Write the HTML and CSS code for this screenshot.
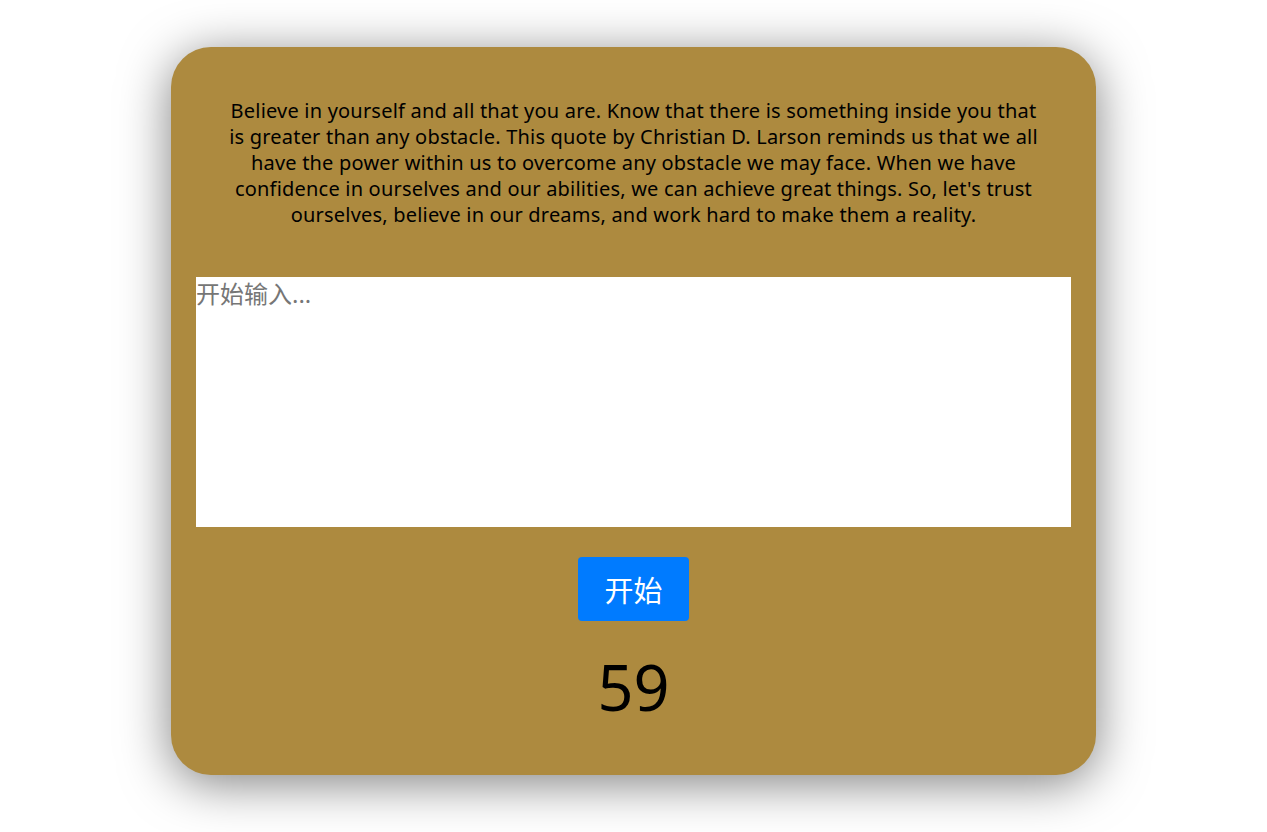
FILE: index.html
```html
<!DOCTYPE html>
<html lang="zh">
<head>
<meta charset="utf-8">
<title>Typing</title>
<link rel="stylesheet" href="styles.css">
</head>
<body>
<main class="card">
  <p class="quote">Believe in yourself and all that you are. Know that there is something inside you that is greater than any obstacle. This quote by Christian D. Larson reminds us that we all have the power within us to overcome any obstacle we may face. When we have confidence in ourselves and our abilities, we can achieve great things. So, let's trust ourselves, believe in our dreams, and work hard to make them a reality.</p>
  <textarea class="input" placeholder="开始输入..."></textarea>
  <div class="actions"><button class="start">开始</button></div>
  <div class="timer">59</div>
</main>
</body>
</html>
```
FILE: styles.css
```css
html, body {
  margin: 0;
  padding: 0;
  background: #fff;
}
body {
  height: 832px;
  overflow: hidden;
  font-family: "Noto Sans", "Noto Sans CJK SC", sans-serif;
}
.card {
  box-sizing: border-box;
  width: 925px;
  height: 728px;
  margin: 47px auto 0;
  padding: 25px;
  background: #ad8a3f;
  border-radius: 40px;
  box-shadow: 0 8px 50px rgba(0, 0, 0, 0.5);
  display: flex;
  flex-direction: column;
}
.quote {
  margin: 26px 31px 49px;
  font-size: 20px;
  letter-spacing: 0.2px;
  line-height: 26px;
  text-align: center;
  color: #000;
}
.input {
  display: block;
  box-sizing: border-box;
  width: 875px;
  height: 250px;
  margin: 0;
  padding: 0;
  border: none;
  outline: none;
  resize: none;
  background: #fff;
  font-family: "Noto Sans", "Noto Sans CJK SC", sans-serif;
  font-size: 24px;
  line-height: 34px;
}
.input::placeholder {
  color: #767676;
}
.actions {
  display: flex;
  justify-content: center;
  margin-top: 30px;
}
.start {
  height: 64px;
  padding: 0 26px;
  border: none;
  border-radius: 4px;
  background: #007bff;
  color: #fff;
  font-family: "Noto Sans CJK SC", sans-serif;
  font-size: 29px;
  cursor: pointer;
}
.timer {
  flex: 1;
  display: flex;
  align-items: center;
  justify-content: center;
  font-size: 63px;
  color: #000;
  padding-top: 2px;
}
```
